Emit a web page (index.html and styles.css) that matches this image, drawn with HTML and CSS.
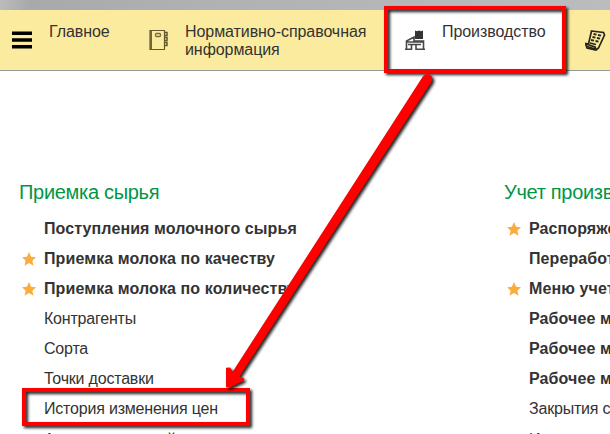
FILE: index.html
```html
<!DOCTYPE html>
<html lang="ru">
<head>
<meta charset="utf-8">
<title>Производство</title>
<link rel="stylesheet" href="styles.css">
</head>
<body>
<div class="app">
  <div class="titlebar"></div>
  <nav class="sections">
    <a class="section main">
      <svg class="icon" width="20" height="22" viewBox="0 0 20 22"><path d="M0 4.300h20M0 11h20M0 17.700h20" stroke="#000" stroke-width="3.400"/></svg>
      <span>Главное</span>
    </a>
    <a class="section reference">
      <svg class="icon" width="20" height="22" viewBox="0 0 20 22"><path d="M1 1.500h14.500v19H1zM2.300 2v18" fill="none" stroke="#62592f" stroke-width="1.200"/><rect x="6.500" y="4.500" width="5" height="3" rx="1" fill="none" stroke="#766c3c" stroke-width="1.300"/><path d="M16 3.500h2v3h-2M16 8.500h2v3h-2M16 13.500h2v3h-2" fill="none" stroke="#62592f" stroke-width="1.500"/></svg>
      <span>Нормативно-справочная<br>информация</span>
    </a>
    <a class="section production">
      <svg class="icon" width="20" height="22" viewBox="0 0 20 22"><path d="M10 1.500l2 .7 2-.7 2 .7 2-.7V10h-8z" fill="#333"/><path d="M1.500 20.500V12L9 8v4h9.500v8.500M1.500 13h17M0 20.300h6.500V15.500h4.500v4.800h9M3 15.500h13" fill="none" stroke="#484848" stroke-width="1.600"/></svg>
      <span>Производство</span>
    </a>
    <a class="section report">
      <svg class="icon" width="21" height="22" viewBox="0 0 21 22"><path d="M6.500 2l12 1.500 1 2.500-6 13-2.500 2-9-2-1.500-4.500 3 .5z" fill="none" stroke="#29251b" stroke-width="1.700"/><path d="M1 15l9 3 1 2.500M2 17.500l8 2.500M8.500 5l3 .7M13 6l3 .7M7.500 8l3 .7M12 9l3 .7M6 11l3 .7M10.500 12l3 .7M5 14l6 1.500" fill="none" stroke="#29251b" stroke-width="1.800"/></svg>
    </a>
  </nav>
  <main class="groups">
    <section class="group">
      <h2>Приемка сырья</h2>
      <ul>
        <li class="strong">Поступления молочного сырья</li>
        <li class="strong fav">Приемка молока по качеству</li>
        <li class="strong fav">Приемка молока по количеству</li>
        <li>Контрагенты</li>
        <li>Сорта</li>
        <li>Точки доставки</li>
        <li>История изменения цен</li>
        <li>Анализ показаний</li>
      </ul>
    </section>
    <section class="group">
      <h2>Учет производства</h2>
      <ul>
        <li class="strong fav">Распоряжения</li>
        <li class="strong">Переработка</li>
        <li class="strong fav">Меню учета</li>
        <li class="strong">Рабочее место</li>
        <li class="strong">Рабочее место</li>
        <li class="strong">Рабочее место</li>
        <li>Закрытия смен</li>
        <li>История</li>
      </ul>
    </section>
  </main>
  <svg class="marks" width="610" height="434" viewBox="0 0 610 434">
    <g class="mark">
      <rect x="386" y="8" width="178" height="63"/>
      <rect x="24" y="390" width="224" height="34"/>
    </g>
    <g class="mark">
      <path class="arrow" d="M422.800 76.500Q425.500 73 430 74.500Q433.500 77 431.800 81.500L239.500 376.500l4.800 2-1 2.500-13 6.300H226v-19.500l4-.2 2.800 4z"/>
    </g>
  </svg>
</div>
</body>
</html>
```

FILE: styles.css
```css
body {
  margin: 0;
  background: #fff;
  color: #333;
  font: 16px/18px "Liberation Sans", Arial, sans-serif;
}
.app {
  position: relative;
  width: 610px;
  height: 434px;
  overflow: hidden;
}
.titlebar {
  height: 10px;
  background: linear-gradient(90deg, #bbb, #a8a9ab 30px, #b0b1b3 200px, #bbbcbe);
}
.sections {
  display: grid;
  grid-template-columns: 137px 250px 178px 45px;
  height: 60px;
  background: #fbeb9e;
  border-bottom: 1px solid #999;
}
.section {
  display: flex;
  align-items: flex-start;
  padding-top: 13px;
  letter-spacing: -0.07px;
  white-space: nowrap;
}
.icon {
  flex: none;
  margin-top: 6px;
}
.main { padding-left: 12px; gap: 17px; }
.reference { padding-left: 12px; gap: 16px; }
.production { padding-left: 18px; gap: 17px; background: #fff; }
.report { padding-left: 20px; }
.groups {
  display: grid;
  grid-template-columns: 485px 300px;
  padding: 109px 0 0 19px;
}
h2 {
  margin: 0 0 10px;
  color: #009646;
  font-size: 20px;
  font-weight: 400;
  letter-spacing: -0.3px;
  line-height: 24px;
}
ul {
  margin: 0;
  padding: 0;
  list-style: none;
}
li {
  display: flex;
  align-items: center;
  height: 30px;
  letter-spacing: -0.2px;
  white-space: nowrap;
}
li::before {
  content: "";
  flex: none;
  width: 14px;
  height: 14px;
  margin: 0 8px 0 3px;
}
.fav::before {
  background: #fbad3c;
  clip-path: polygon(50% 0, 65% 34%, 100% 38%, 74% 62%, 82% 98%, 50% 79%, 18% 98%, 26% 62%, 0 38%, 35% 34%);
}
.strong {
  font-weight: 700;
  letter-spacing: 0.1px;
}
li:last-child { padding-top: 1px; }
.marks {
  position: absolute;
  inset: 0;
}
.mark {
  filter: drop-shadow(2px 2px 1.500px #000d);
}
.mark rect {
  fill: none;
  stroke: #f00;
  stroke-width: 4;
}
.arrow { fill: #f00; }
```
